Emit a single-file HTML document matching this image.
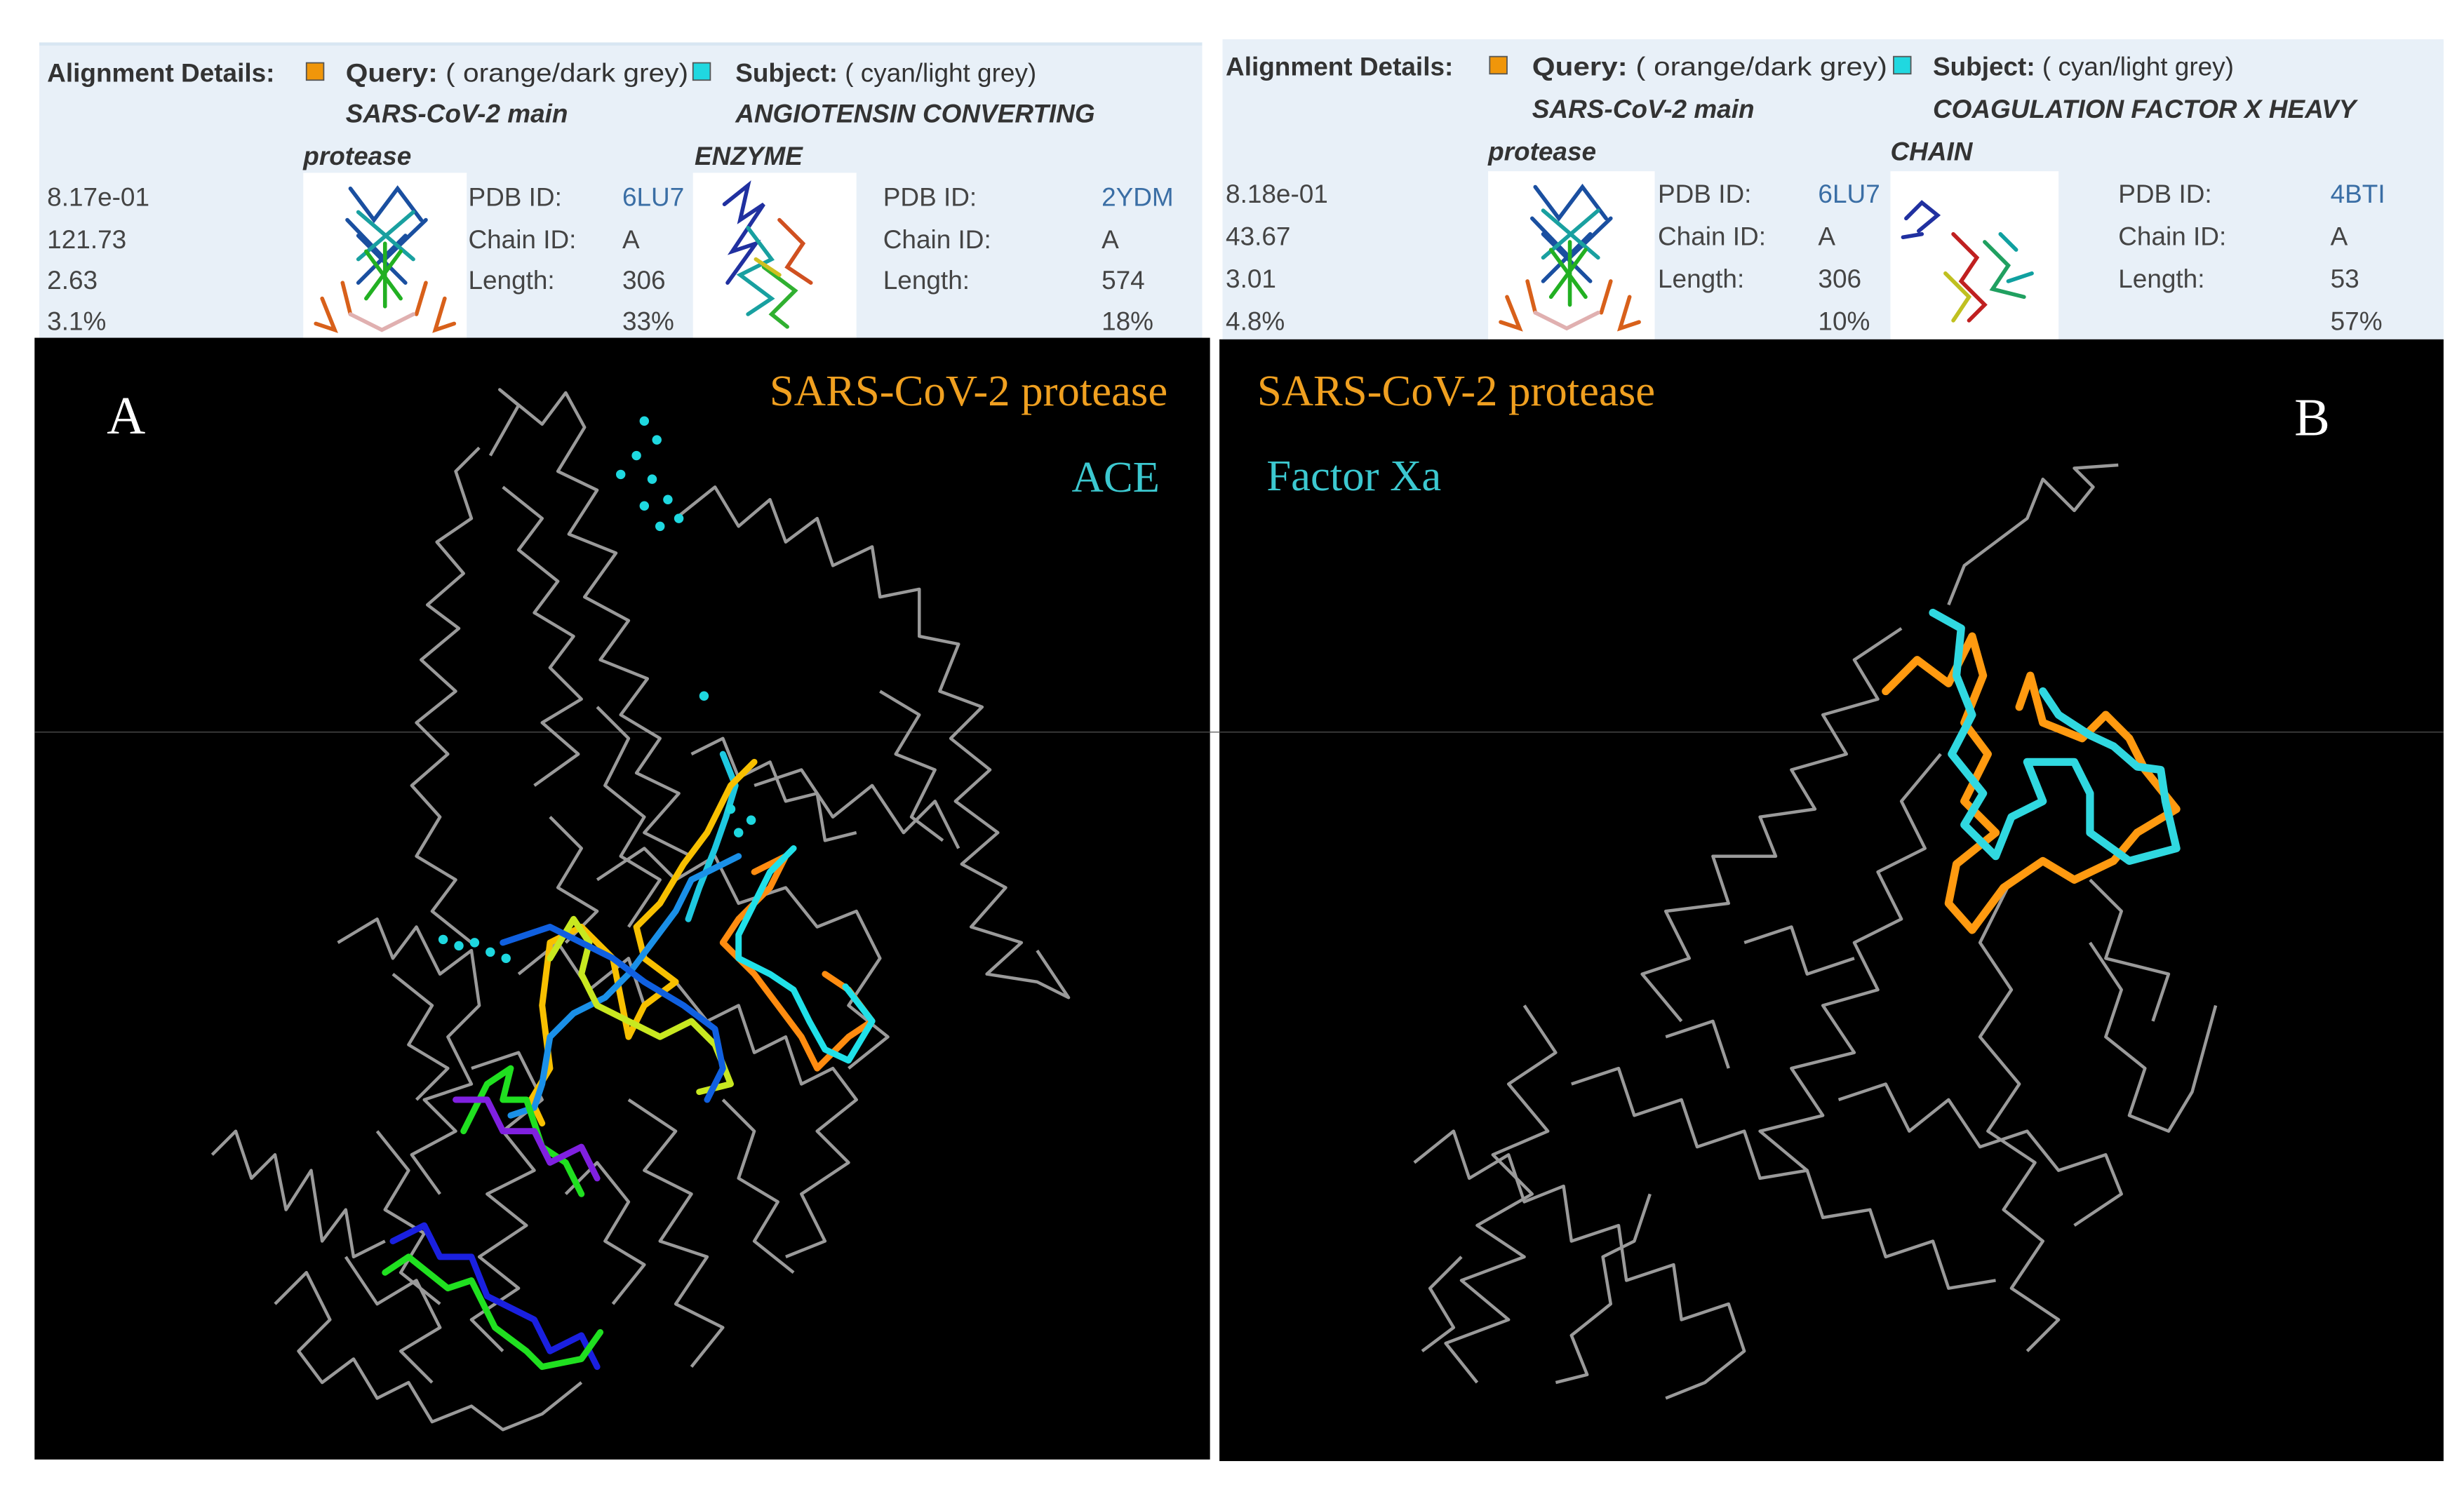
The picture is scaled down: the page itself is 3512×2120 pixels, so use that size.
<!DOCTYPE html>
<html><head><meta charset="utf-8">
<style>
html,body{margin:0;padding:0;background:#fff;width:3512px;height:2120px;overflow:hidden}
svg{display:block}
text{font-family:"Liberation Sans",Arial,sans-serif}
.h{font-size:16.5px;fill:#333}
.b{font-weight:bold}
.i{font-style:italic;font-weight:bold}
.d{font-size:16.5px;fill:#444}
.l{fill:#3a6ea5}
.g{fill:none;stroke:#9a9a9a;stroke-width:2;stroke-linejoin:round}
.s{font-family:"Liberation Serif","Times New Roman",serif}
</style></head><body>
<svg width="3512" height="2120" viewBox="0 0 1568 946.5" preserveAspectRatio="none">
<rect width="1568" height="946.5" fill="#fff"/>
<rect x="25" y="27" width="740" height="190" fill="#e8f0f8"/>
<rect x="25" y="27" width="740" height="2" fill="#d8e6f2"/>
<rect x="778" y="25" width="777" height="192" fill="#e8f0f8"/>
<text x="30" y="52" class="h b">Alignment Details:</text>
<rect x="195" y="40" width="11" height="11" fill="#f0960a" stroke="#555" stroke-width="0.8"/>
<text x="220" y="52" class="h" textLength="218" lengthAdjust="spacingAndGlyphs"><tspan class="b">Query:</tspan> ( orange/dark grey)</text>
<rect x="441" y="40" width="11" height="11" fill="#20d8e0" stroke="#555" stroke-width="0.8"/>
<text x="468" y="52" class="h"><tspan class="b">Subject:</tspan> ( cyan/light grey)</text>
<text x="220" y="78" class="h i">SARS-CoV-2 main</text>
<text x="468" y="78" class="h i">ANGIOTENSIN CONVERTING</text>
<text x="193" y="105" class="h i">protease</text>
<text x="442" y="105" class="h i">ENZYME</text>
<text x="30" y="131" class="d">8.17e-01</text>
<text x="30" y="158" class="d">121.73</text>
<text x="30" y="184" class="d">2.63</text>
<text x="30" y="210" class="d">3.1%</text>
<rect x="193" y="110" width="104" height="106" fill="#fff"/>
<rect x="441" y="110" width="104" height="106" fill="#fff"/>
<text x="298" y="131" class="d">PDB ID:</text><text x="396" y="131" class="d l">6LU7</text>
<text x="298" y="158" class="d">Chain ID:</text><text x="396" y="158" class="d">A</text>
<text x="298" y="184" class="d">Length:</text><text x="396" y="184" class="d">306</text>
<text x="396" y="210" class="d">33%</text>
<text x="562" y="131" class="d">PDB ID:</text><text x="701" y="131" class="d l">2YDM</text>
<text x="562" y="158" class="d">Chain ID:</text><text x="701" y="158" class="d">A</text>
<text x="562" y="184" class="d">Length:</text><text x="701" y="184" class="d">574</text>
<text x="701" y="210" class="d">18%</text>
<text x="780" y="48" class="h b">Alignment Details:</text>
<rect x="948" y="36" width="11" height="11" fill="#f0960a" stroke="#555" stroke-width="0.8"/>
<text x="975" y="48" class="h" textLength="226" lengthAdjust="spacingAndGlyphs"><tspan class="b">Query:</tspan> ( orange/dark grey)</text>
<rect x="1205" y="36" width="11" height="11" fill="#20d8e0" stroke="#555" stroke-width="0.8"/>
<text x="1230" y="48" class="h"><tspan class="b">Subject:</tspan> ( cyan/light grey)</text>
<text x="975" y="75" class="h i">SARS-CoV-2 main</text>
<text x="1230" y="75" class="h i">COAGULATION FACTOR X HEAVY</text>
<text x="947" y="102" class="h i">protease</text>
<text x="1203" y="102" class="h i">CHAIN</text>
<text x="780" y="129" class="d">8.18e-01</text>
<text x="780" y="156" class="d">43.67</text>
<text x="780" y="183" class="d">3.01</text>
<text x="780" y="210" class="d">4.8%</text>
<rect x="947" y="109" width="106" height="108" fill="#fff"/>
<rect x="1203" y="109" width="107" height="108" fill="#fff"/>
<text x="1055" y="129" class="d">PDB ID:</text><text x="1157" y="129" class="d l">6LU7</text>
<text x="1055" y="156" class="d">Chain ID:</text><text x="1157" y="156" class="d">A</text>
<text x="1055" y="183" class="d">Length:</text><text x="1157" y="183" class="d">306</text>
<text x="1157" y="210" class="d">10%</text>
<text x="1348" y="129" class="d">PDB ID:</text><text x="1483" y="129" class="d l">4BTI</text>
<text x="1348" y="156" class="d">Chain ID:</text><text x="1483" y="156" class="d">A</text>
<text x="1348" y="183" class="d">Length:</text><text x="1483" y="183" class="d">53</text>
<text x="1483" y="210" class="d">57%</text>
<g fill="none" stroke-width="2.5" stroke-linecap="round">
 <g transform="translate(193,110)">
  <path d="M30 10 L45 30 L60 10 L75 30 M28 30 L52 55 L78 30 M35 40 L65 70 M65 40 L35 70" stroke="#1a4fa0"/>
  <path d="M35 25 L70 55 M70 25 L35 55" stroke="#19a0a0"/>
  <path d="M40 50 L62 80 M62 50 L40 80 M52 45 L52 85" stroke="#22b022"/>
  <path d="M12 80 L20 100 L8 96 M90 80 L84 100 L96 96 M25 70 L30 90 M78 70 L72 90" stroke="#d8601a"/>
  <path d="M30 90 L50 100 L70 90" stroke="#e0b0b0"/>
 </g>
 <g transform="translate(947,109)">
  <path d="M30 10 L45 30 L60 10 L75 30 M28 30 L52 55 L78 30 M35 40 L65 70 M65 40 L35 70" stroke="#1a4fa0"/>
  <path d="M35 25 L70 55 M70 25 L35 55" stroke="#19a0a0"/>
  <path d="M40 50 L62 80 M62 50 L40 80 M52 45 L52 85" stroke="#22b022"/>
  <path d="M12 80 L20 100 L8 96 M90 80 L84 100 L96 96 M25 70 L30 90 M78 70 L72 90" stroke="#d8601a"/>
  <path d="M30 90 L50 100 L70 90" stroke="#e0b0b0"/>
 </g>
 <g transform="translate(441,110)">
  <path d="M20 20 L35 8 L30 30 L45 20 L25 50 L40 45 L22 70" stroke="#2030a0"/>
  <path d="M35 35 L50 55 L30 65 L50 80 L35 90" stroke="#18a0a0"/>
  <path d="M55 30 L70 45 L60 60 L75 70" stroke="#d05020"/>
  <path d="M45 60 L65 75 L50 90 L60 98" stroke="#30b030"/>
  <path d="M40 55 L55 65" stroke="#d0c020"/>
 </g>
 <g transform="translate(1203,109)">
  <path d="M10 30 L20 20 L30 28 L18 38 M8 42 L20 40" stroke="#2030a0"/>
  <path d="M40 40 L55 55 L45 70 L60 85 L50 95" stroke="#c02020"/>
  <path d="M60 45 L75 60 L65 75 L85 80" stroke="#20a060"/>
  <path d="M35 65 L50 80 L40 95" stroke="#c0c020"/>
  <path d="M70 40 L80 50 M75 70 L90 65" stroke="#10a0a0"/>
 </g>
</g>
<rect x="22" y="215" width="748" height="714" fill="#000"/>
<rect x="776" y="216" width="779" height="714" fill="#000"/>
<line x1="22" y1="466" x2="1555" y2="466" stroke="#555" stroke-width="0.6"/>
<g class="g">
<polyline class="g" points="312,290 330,258 318,248 345,270 360,250 372,272 355,300 380,312 362,340 392,352 372,380 400,395 382,420 412,432 395,455 420,470 405,492 432,505 410,530 440,545"/>
<polyline class="g" points="305,285 290,300 300,330 278,345 295,365 272,385 292,400 268,420 290,440 265,460 285,480 262,500 280,520 265,545 290,560 275,580 300,600"/>
<polyline class="g" points="320,310 345,330 330,350 355,370 340,390 365,405 350,425 370,445 345,460 368,480 340,500"/>
<polyline class="g" points="430,330 455,310 470,335 490,318 500,345 520,330 530,360 555,348 560,380 585,375 585,405 610,410 598,440 625,450 605,470 630,490 608,510 635,530 612,550 640,565 618,590 650,600 628,620 660,625 680,635 660,605"/>
<polyline class="g" points="215,600 240,585 250,610 265,590 280,620 300,605 305,640 285,660 300,690 270,700 290,720 262,735 280,760"/>
<polyline class="g" points="135,735 150,720 160,750 175,735 182,770 198,745 205,790 220,770 225,800 245,790"/>
<polyline class="g" points="175,830 195,810 210,840 190,860 205,880 225,865 240,890 260,880 275,905 300,895 320,910 345,900 370,880"/>
<polyline class="g" points="330,620 355,600 375,630 400,610 410,640 430,625 450,650 470,640 480,670 500,660 510,690 530,680 545,700 520,720 540,740 510,760 525,790 500,800"/>
<polyline class="g" points="300,680 330,670 345,700 320,720 340,745 310,760 335,780 305,800 330,820 300,840 320,860"/>
<polyline class="g" points="380,560 410,540 430,560 455,545 470,575 500,565 520,590 545,580 560,610 540,640 565,660 540,680"/>
<polyline class="g" points="220,800 240,830 265,815 280,845 255,860 275,880"/>
<polyline class="g" points="400,700 430,720 410,745 440,760 420,790 450,800 430,830 460,845 440,870"/>
<polyline class="g" points="480,500 510,490 530,520 555,500 575,530 595,510 610,540"/>
<polyline class="g" points="250,620 275,640 260,665 285,680 265,700"/>
<polyline class="g" points="360,760 380,740 400,765 385,790 410,805 390,830"/>
<polyline class="g" points="380,450 400,470 385,500 410,520 395,545 420,560 400,590"/>
<polyline class="g" points="440,480 460,470 470,495 490,485 500,510 520,505 525,535 545,530"/>
<polyline class="g" points="350,520 370,540 355,565 380,580 360,600"/>
<polyline class="g" points="240,720 260,745 245,770 270,785 255,810 280,830"/>
<polyline class="g" points="560,440 585,455 570,480 595,490 580,520 600,535"/>
<polyline class="g" points="460,700 480,720 470,750 495,765 480,790 505,810"/>
</g>
<g fill="none" stroke-width="4" stroke-linejoin="round" stroke-linecap="round">
<polyline stroke="#1ec8e0" points="460,480 468,500 462,520 455,540 445,565 438,585"/>
<polyline stroke="#ff8c10" points="480,555 500,545 490,565 470,585 460,600 480,620 495,640 510,660 520,680 540,660 555,650 540,630 525,620"/>
<polyline stroke="#20e0e8" points="505,540 490,555 480,575 470,595 470,610 490,620 505,630 515,650 525,668 540,675 555,650 538,628"/>
<polyline stroke="#f8c000" points="480,485 465,500 450,530 435,550 420,575 405,590 410,610 430,625 410,640 400,660 390,610 370,590 350,600 345,640 350,680 338,700 345,715"/>
<polyline stroke="#1a90e8" points="470,545 440,560 430,580 415,600 400,620 385,635 365,645 350,660 345,690 340,705 325,710"/>
<polyline stroke="#c8e820" points="350,610 365,585 375,600 370,620 380,640 400,650 420,660 440,650 455,665 465,690 445,695"/>
<polyline stroke="#1060e0" points="320,600 350,590 370,600 390,610 410,625 435,640 455,655 460,680 450,700"/>
<polyline stroke="#20e020" points="295,720 310,690 325,680 320,700 335,700 345,730 360,740 370,760"/>
<polyline stroke="#8020e0" points="290,700 310,700 320,720 340,720 350,740 370,730 380,750"/>
<polyline stroke="#1a20e0" points="250,790 270,780 280,800 300,800 310,825 320,830 340,840 350,860 370,850 380,870"/>
<polyline stroke="#20e020" points="245,810 260,800 285,820 300,815 315,845 335,860 345,870 370,865 382,848"/>
</g>
<g fill="#1ed8e0">
<circle cx="410" cy="268" r="3"/><circle cx="418" cy="280" r="3"/><circle cx="405" cy="290" r="3"/><circle cx="395" cy="302" r="3"/><circle cx="415" cy="305" r="3"/><circle cx="425" cy="318" r="3"/><circle cx="410" cy="322" r="3"/><circle cx="420" cy="335" r="3"/><circle cx="432" cy="330" r="3"/><circle cx="448" cy="443" r="3"/>
<circle cx="465" cy="515" r="3"/><circle cx="478" cy="522" r="3"/><circle cx="470" cy="530" r="3"/>
<circle cx="282" cy="598" r="3"/><circle cx="292" cy="602" r="3"/><circle cx="302" cy="600" r="3"/><circle cx="312" cy="606" r="3"/><circle cx="322" cy="610" r="3"/>
</g>
<g class="g">
<polyline class="g" points="1240,385 1250,360 1270,345 1290,330 1300,305 1320,325 1332,310 1320,298 1348,296"/>
<polyline class="g" points="1210,400 1180,420 1195,445 1160,455 1175,480 1140,490 1155,515 1120,520 1130,545 1090,545 1100,575 1060,580 1075,610 1045,620 1070,650"/>
<polyline class="g" points="1235,480 1210,510 1225,540 1195,555 1210,585 1180,600 1195,630 1160,640 1180,670 1140,680 1160,710 1120,720 1150,745"/>
<polyline class="g" points="1280,560 1260,600 1280,630 1260,660 1285,690 1265,720 1295,740 1275,770 1300,790 1280,820 1310,840 1290,860"/>
<polyline class="g" points="1330,600 1350,630 1340,660 1365,680 1355,710 1380,720 1395,695 1410,640"/>
<polyline class="g" points="970,640 990,670 960,690 985,720 950,735 975,760 940,780 970,800 930,815 960,840 920,855 940,880"/>
<polyline class="g" points="900,740 925,720 935,750 960,735 970,765 995,755 1000,790 1030,780 1035,815 1065,805 1070,840 1100,830 1110,860 1085,880 1060,890"/>
<polyline class="g" points="1000,690 1030,680 1040,710 1070,700 1080,730 1110,720 1120,750 1150,745 1160,775 1190,770 1200,800 1230,790 1240,820 1270,815"/>
<polyline class="g" points="1170,700 1200,690 1215,720 1240,700 1260,730 1290,720 1310,745 1340,735 1350,760 1320,780"/>
<polyline class="g" points="1050,760 1040,790 1020,800 1025,830 1000,850 1010,875 990,880"/>
<polyline class="g" points="930,800 910,820 925,845 905,860"/>
<polyline class="g" points="1330,560 1350,580 1340,610 1380,620 1370,650"/>
<polyline class="g" points="1110,600 1140,590 1150,620 1180,610"/>
<polyline class="g" points="1060,660 1090,650 1100,680"/>
</g>
<g fill="none" stroke-width="5" stroke-linejoin="round" stroke-linecap="round">
<polyline stroke="#ff9a10" points="1200,440 1220,420 1240,435 1255,405 1262,430 1250,460 1265,480 1250,510 1270,530 1245,550 1240,575 1255,592 1275,565 1300,548 1320,560 1345,548 1360,530 1385,515 1365,490 1355,470 1340,455 1325,470 1300,460 1292,430 1285,450"/>
<polyline stroke="#30d8e0" points="1230,390 1248,400 1245,430 1255,455 1242,480 1262,505 1250,525 1270,545 1280,520 1300,510 1290,485 1320,485 1330,505 1330,530 1355,548 1385,540 1378,510 1375,490 1360,488 1345,475 1330,468 1310,455 1300,440"/>
</g>
<text x="743" y="258" text-anchor="end" class="s" font-size="28" fill="#f0a020">SARS-CoV-2 protease</text>
<text x="738" y="313" text-anchor="end" class="s" font-size="28" fill="#3cc8d0">ACE</text>
<text x="68" y="276" class="s" font-size="34" fill="#fff">A</text>
<text x="800" y="258" class="s" font-size="28" fill="#f0a020">SARS-CoV-2 protease</text>
<text x="806" y="312" class="s" font-size="28" fill="#3cc8d0">Factor Xa</text>
<text x="1460" y="277" class="s" font-size="34" fill="#fff">B</text>
</svg>
</body></html>
